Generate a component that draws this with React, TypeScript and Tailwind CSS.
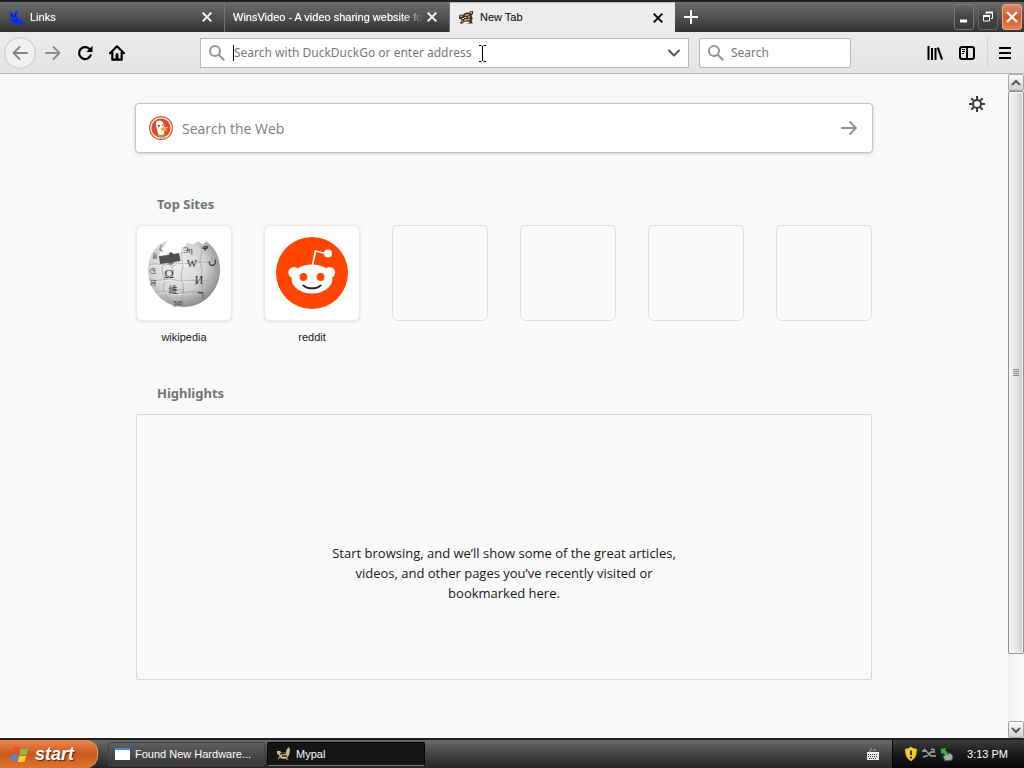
import type { ReactNode } from "react";

function RabbitIcon() {
  return (
    <svg width="16" height="16" viewBox="0 0 16 16" aria-hidden="true">
      <path d="M1 1l2.500 4.500L4 2l2 4.500L8 1l1.500 1-.5 5.500 2 2 4 1.500 1 2.500-4 2.500-6-1-4-4 1-3z" fill="#0a35e6" />
      <path d="M3 5l2 4M7.500 4l-.5 4M5 11l5 1.500" stroke="#0a1f8a" fill="none" />
    </svg>
  );
}

function MypalIcon() {
  return (
    <svg width="16" height="16" viewBox="0 0 16 16" aria-hidden="true">
      <path d="M1 6c1-2 3-1.500 4-1 1-2 4-3 6-2l1-2 3 0 0 3-1.500 1.500C15 8 15 10 13.500 10.500l1.500 3-3-.5-1.500-1.500H7L4 13.500l-2-.5 2-3L1 8.500z" fill="#3b2c1c" />
      <path d="M2 6.500l2.500-.5M7 5.500l4-1M6 10l6-.5M4 12l1-1" stroke="#cf9c5c" strokeWidth="1.300" fill="none" />
      <path d="M6.500 7.500h2M10 7h2M4 8.500h2" stroke="#fff1d0" fill="none" />
      <circle cx="13" cy="2.600" r="1.100" fill="#b9a888" />
      <path d="M9.500 13.500h4M2 13.500h3" stroke="#8a8278" fill="none" />
    </svg>
  );
}

function CloseIcon() {
  return (
    <svg width="10" height="10" viewBox="0 0 10 10" aria-hidden="true">
      <path d="M0.700 0.700l8.600 8.600M9.300 0.700l-8.600 8.600" stroke="currentColor" strokeWidth="1.900" fill="none" />
    </svg>
  );
}

function SearchIcon() {
  return (
    <svg width="16" height="16" viewBox="0 0 16 16" className="shrink-0 text-[#949494]" aria-hidden="true">
      <circle cx="6" cy="6" r="5" stroke="currentColor" strokeWidth="2" fill="none" />
      <path d="M9.700 9.700l5.600 5.600" stroke="currentColor" strokeWidth="2" />
    </svg>
  );
}

function Tab({ title, icon, active = false }: { title: string; icon?: ReactNode; active?: boolean }) {
  return (
    <div
      className={
        active
          ? "flex w-[225px] min-w-0 items-center border-t border-[#bdbdbd] bg-[#ececec] pr-3 pl-2 text-black"
          : "flex w-[225px] min-w-0 items-center border-r border-[#747474] pr-3 pl-2 text-white"
      }
    >
      {icon && <span className="mr-1.5 shrink-0">{icon}</span>}
      <span
        className={
          active
            ? "flex-1 overflow-hidden text-[11px] whitespace-nowrap"
            : "flex-1 overflow-hidden mask-r-from-90% text-[11px] whitespace-nowrap text-shadow-[0_0_1px_#ffffff99]"
        }
      >
        {title}
      </span>
      <button type="button" aria-label={"Close " + title} className="ml-1 shrink-0">
        <CloseIcon />
      </button>
    </div>
  );
}

function TabBar() {
  return (
    <header className="flex h-8 border-t-2 border-[#242224] bg-linear-to-b from-[#6b6b6b] via-[#525252] via-50% to-[#323132] font-['Liberation_Sans',sans-serif]">
      <Tab title="Links" icon={<RabbitIcon />} />
      <Tab title="WinsVideo - A video sharing website fo" />
      <Tab title="New Tab" icon={<MypalIcon />} active />
      <button type="button" aria-label="New tab" className="px-2 text-white">
        <svg width="16" height="16" viewBox="0 0 16 16">
          <path d="M8 1v14M1 8h14" stroke="currentColor" strokeWidth="2" />
        </svg>
      </button>
      <div className="ml-auto flex items-center gap-1 pr-0.5 text-white">
        <button type="button" aria-label="Minimize" className="flex h-[26px] w-5 items-center justify-center rounded-[3px] border border-[#777] bg-linear-to-b from-[#666] via-[#444] to-[#3a3a3a]">
          <svg width="14" height="14" viewBox="0 0 14 14">
            <path d="M3 11h7" stroke="currentColor" strokeWidth="3" />
          </svg>
        </button>
        <button type="button" aria-label="Restore" className="flex h-[26px] w-5 items-center justify-center rounded-[3px] border border-[#666] bg-linear-to-b from-[#666] via-[#444] to-[#3a3a3a]">
          <svg width="12" height="12" viewBox="0 0 12 12" fill="none" stroke="currentColor">
            <path d="M4 3V1.500h6.500v6H9" />
            <path d="M4 1.500h7M1 5h7" strokeWidth="2" />
            <path d="M1.500 4.500h6v5.500h-6z" />
          </svg>
        </button>
        <button type="button" aria-label="Close" className="flex h-[26px] w-5 items-center justify-center rounded-[3px] border border-[#eba487] bg-linear-to-b from-[#dd8a6c] via-[#cf5a2e] to-[#e47f4a]">
          <svg width="12" height="12" viewBox="0 0 12 12">
            <path d="M1 1l10 10M11 1L1 11" stroke="currentColor" strokeWidth="2.200" />
          </svg>
        </button>
      </div>
    </header>
  );
}

function NavBar() {
  return (
    <nav className="flex h-[42px] items-center border-b border-[#b4b4b4] bg-linear-to-b from-[#ececec] to-[#e4e4e4] px-1 pt-px">
      <div className="flex w-[196px] shrink-0 items-center">
        <button type="button" aria-label="Back" className="flex size-8 items-center justify-center rounded-full border border-[#c8c8c8] bg-[#f1f1f1] text-[#858585]">
          <svg width="16" height="16" viewBox="0 0 16 16" fill="none" stroke="currentColor" strokeWidth="2" strokeLinecap="round" strokeLinejoin="round">
            <path d="M15 8H1.500M7.500 2l-6 6 6 6" />
          </svg>
        </button>
        <button type="button" aria-label="Forward" className="flex w-8 justify-center pl-0.5 text-[#8c8c8c]">
          <svg width="16" height="16" viewBox="0 0 16 16" fill="none" stroke="currentColor" strokeWidth="2" strokeLinecap="round" strokeLinejoin="round">
            <path d="M1 8h13.500M8.500 2l6 6-6 6" />
          </svg>
        </button>
        <button type="button" aria-label="Reload" className="flex w-8 justify-center pl-0.5">
          <svg width="16" height="16" viewBox="0 0 16 16">
            <path d="M13.700 10.200A6 6 0 1 1 12.300 3.800" fill="none" stroke="#000" strokeWidth="2.200" strokeLinecap="round" />
            <path d="M15.500 0.700v6.200h-6.200z" fill="#000" />
          </svg>
        </button>
        <button type="button" aria-label="Home" className="flex w-8 justify-center pl-0.5">
          <svg width="16" height="16" viewBox="0 0 16 16">
            <path d="M1 8.200L8 1.300l7 6.900" fill="none" stroke="#000" strokeWidth="2.200" strokeLinecap="round" strokeLinejoin="round" />
            <path d="M3.300 7v7.700h9.400V7" fill="none" stroke="#000" strokeWidth="2.200" strokeLinejoin="round" />
            <path d="M6.500 14.500V9.500a1.500 1.500 0 0 1 3 0v5z" fill="#000" />
          </svg>
        </button>
      </div>
      <form className="relative flex h-[30px] flex-1 items-center border border-[#b6b6b6] bg-white pr-1.5 pl-2" onSubmit={(e) => e.preventDefault()}>
        <SearchIcon />
        <span className="ml-2 h-4 w-px shrink-0 bg-black" />
        <input aria-label="Address" placeholder="Search with DuckDuckGo or enter address" className="min-w-0 flex-1 bg-transparent text-[12px] outline-none placeholder:text-[#777]" />
        <button type="button" aria-label="Show history" className="text-[#555]">
          <svg width="16" height="16" viewBox="0 0 16 16">
            <path d="M3 5.500l5 5 5-5" fill="none" stroke="currentColor" strokeWidth="2" strokeLinecap="round" strokeLinejoin="round" />
          </svg>
        </button>
        <svg width="9" height="17" viewBox="0 0 9 17" className="pointer-events-none absolute top-1.5 left-[277px]" aria-hidden="true">
          <path d="M1 .5h2.500M5.500 .5H8M1 16.500h2.500M5.500 16.500H8M4.500 1v15" stroke="#000" fill="none" />
        </svg>
      </form>
      <form className="ml-2.5 flex h-[30px] w-[152px] items-center rounded-xs border border-[#b6b6b6] bg-white px-2" onSubmit={(e) => e.preventDefault()}>
        <SearchIcon />
        <input aria-label="Search" placeholder="Search" className="ml-[7px] min-w-0 flex-1 bg-transparent text-[12px] outline-none placeholder:text-[#777]" />
      </form>
      <div className="flex w-[169px] shrink-0 items-center justify-end gap-4">
        <button type="button" aria-label="Library">
          <svg width="16" height="16" viewBox="0 0 16 16" fill="none" stroke="#000" strokeWidth="2">
            <path d="M1.500 1v14M5 3v12M8.500 3v12" />
            <path d="M10.800 2.500l4.200 12" strokeWidth="2.200" />
          </svg>
        </button>
        <button type="button" aria-label="Sidebars">
          <svg width="16" height="16" viewBox="0 0 16 16" fill="none" stroke="#000">
            <rect x="1" y="2" width="14" height="12" rx="2.200" strokeWidth="2" />
            <path d="M8 2v12" strokeWidth="2" />
            <path d="M3 4.500h3M3 6.500h3M3 8.500h2" />
          </svg>
        </button>
        <div className="-mr-1.5 -ml-1 h-8 w-px bg-[#d4d4d4]" />
        <button type="button" aria-label="Menu" className="pr-2">
          <svg width="14" height="14" viewBox="0 0 14 14">
            <path d="M1 2h12M1 7h12M1 12h12" stroke="#000" strokeWidth="2" />
          </svg>
        </button>
      </div>
    </nav>
  );
}

function DuckIcon() {
  return (
    <svg width="24" height="24" viewBox="0 0 24 24" className="shrink-0" aria-hidden="true">
      <circle cx="12" cy="12" r="12" fill="#dc4f2e" />
      <circle cx="12" cy="12" r="10.200" fill="none" stroke="#fbe4dc" strokeWidth="1.300" />
      <path d="M7 6.500C7.500 4.500 11 3.500 13.500 6c2 2 2.200 5 1.700 8l-.2 7.500-5-.5C9 16 6.500 10 7 6.500z" fill="#fdf8ee" />
      <circle cx="9.800" cy="9.800" r="1" fill="#27466b" />
      <circle cx="13.800" cy="9.300" r=".8" fill="#27466b" />
      <path d="M11.500 12.500c2-1.500 5-1.800 8-1.500-1 1.500-3 1.700-3 2.500s2 .7 2 1.300c-2 .9-6.500 .5-7-2.300z" fill="#f5b52f" />
      <path d="M9.500 18.500l3 .5 3.500-1.500v4l-5.500 .3z" fill="#83a951" />
    </svg>
  );
}

function WikipediaLogo() {
  return (
    <svg width="76" height="72" viewBox="0 0 76 72" aria-hidden="true">
      <defs>
        <radialGradient id="globe" cx=".4" cy=".38" r=".66">
          <stop offset="0" stopColor="#eeeeee" />
          <stop offset=".6" stopColor="#d3d3d3" />
          <stop offset="1" stopColor="#858585" />
        </radialGradient>
      </defs>
      <path d="M21 3.500C8 9 2 20 2 33c0 20 16 37 36 37s36-17 36-37C74 20 69 10 60 4.500l-3 3-5-3-5 3-6-2-2 4-4 1v4l-4 3-9-1-9 4 2-7 4-5z" fill="url(#globe)" />
      <path d="M13 19l10-1c-1-3 4-4 4-1l6-1 1.500 8-7 1c1 4-5 5-5 1L14 27z" fill="#515151" />
      <g fill="none" stroke="#a2a2a2" strokeWidth=".8">
        <path d="M36 15c-1 9 3 11 0 19s3 13 1 21 1 10 0 14M3 28c9-3 12 2 20-1s14 2 20-1 18 1 30-2M3 42c11 4 17-2 25 1s14-1 20 1 16-2 25-2M11 56c10-4 15 3 25 0s21 0 29-2" />
        <path d="M17 28c-3 9 4 12 1 19s5 14 7 19M55 8c3 8-3 15 0 21s-2 12 1 20-2 12-4 17M30 28c-4 0-5 4-2 6M46 43c5 0 5 4 2 6M31 54c4-3 7-1 7 2" />
      </g>
      <g fill="none" stroke="#f4f4f4" strokeWidth=".7">
        <path d="M37 17c-1 8 3 10 0 18M4 29c9-3 12 2 20-1s14 2 20-1M4 43c11 4 17-2 25 1s14-1 20 1M12 57c10-4 15 3 25 0" />
      </g>
      <g fill="#343434" fontFamily="Liberation Serif, serif" textAnchor="middle">
        <text x="23" y="41" fontSize="13">Ω</text>
        <text x="46" y="30" fontSize="11">W</text>
        <text x="53" y="47" fontSize="12">И</text>
        <text x="27" y="56" fontSize="9" fontFamily="Noto Sans CJK SC, sans-serif">維</text>
        <text x="42" y="16" fontSize="8">Эη</text>
        <text x="59" y="14" fontSize="10">ቀ</text>
        <text x="66" y="27" fontSize="12">ن</text>
        <text x="55" y="62" fontSize="13">ר</text>
        <text x="32" y="68" fontSize="7">უთ</text>
        <text x="6" y="37" fontSize="10">ও</text>
        <text x="7" y="49" fontSize="9">ल</text>
        <text x="9" y="22" fontSize="8">й</text>
        <text x="15" y="14" fontSize="8">ζ</text>
      </g>
    </svg>
  );
}

function RedditLogo() {
  return (
    <svg width="72" height="72" viewBox="0 0 72 72" aria-hidden="true">
      <circle cx="36" cy="36" r="36" fill="#ff4500" />
      <path d="M36.500 28l3-14 12 3" fill="none" stroke="#fff" strokeWidth="1.800" strokeLinejoin="round" />
      <circle cx="52" cy="16.500" r="4" fill="#fff" />
      <circle cx="18" cy="35.500" r="5.600" fill="#fff" />
      <circle cx="53.500" cy="35.500" r="5.600" fill="#fff" />
      <ellipse cx="36" cy="42" rx="20.500" ry="14.500" fill="#fff" />
      <circle cx="27.500" cy="40" r="3.900" fill="#ff4500" />
      <circle cx="44.500" cy="40" r="3.900" fill="#ff4500" />
      <path d="M27.500 48.500c4 3.800 13 3.800 17 0" fill="none" stroke="#222" strokeWidth="2" strokeLinecap="round" />
    </svg>
  );
}

function Site({ name, children }: { name: string; children: ReactNode }) {
  return (
    <a href="#" className="flex w-24 flex-col text-center font-['Liberation_Sans',sans-serif] text-[11px] leading-4 text-[#171717]">
      <span className="flex h-24 items-center justify-center rounded-md border border-[#ececec] bg-white shadow-[0_1px_3px_#dadada]">{children}</span>
      <span className="mt-2">{name}</span>
    </a>
  );
}

function NewTabPage() {
  return (
    <main className="relative flex-1 bg-[#f9f9fa] px-6 pt-[29px] pb-10">
      <button type="button" aria-label="Customize this page" className="absolute top-[22px] right-[23px] text-[#3c3c3c]">
        <svg width="16" height="16" viewBox="0 0 16 16" fill="none" stroke="currentColor">
          <circle cx="8" cy="8" r="4" strokeWidth="2" />
          <path d="M8 0v4M8 12v4M0 8h4M12 8h4M2.300 2.300l2.800 2.800M10.900 10.900l2.800 2.800M13.700 2.300l-2.800 2.800M5.100 10.900l-2.800 2.800" strokeWidth="2" />
        </svg>
      </button>
      <div className="mx-auto max-w-[738px]">
        <form className="flex h-[50px] items-center rounded-sm border border-[#c4c4c4] bg-white px-[13px] shadow-[0_1px_3px_#d4d4d4]" onSubmit={(e) => e.preventDefault()}>
          <DuckIcon />
          <input aria-label="Search the Web" placeholder="Search the Web" className="ml-[9px] min-w-0 flex-1 bg-transparent font-['Open_Sans',sans-serif] text-[14px] outline-none placeholder:text-[#7d7d7d]" />
          <button type="submit" aria-label="Submit search" className="pr-0.5 text-[#909090]">
            <svg width="16" height="16" viewBox="0 0 16 16" fill="none" stroke="currentColor" strokeWidth="1.800" strokeLinecap="round" strokeLinejoin="round">
              <path d="M0.900 8h14M9 2l6 6-6 6" />
            </svg>
          </button>
        </form>
        <section className="mt-[39px] px-px">
          <h2 className="pl-[21px] text-[13px] leading-6 font-bold text-[#737373]">Top Sites</h2>
          <div className="mt-[9px] flex flex-wrap justify-between gap-y-4">
            <Site name="wikipedia"><WikipediaLogo /></Site>
            <Site name="reddit"><RedditLogo /></Site>
            <div className="size-24 rounded-md border border-[#dedede]" />
            <div className="size-24 rounded-md border border-[#dedede]" />
            <div className="size-24 rounded-md border border-[#dedede]" />
            <div className="size-24 rounded-md border border-[#dedede]" />
          </div>
        </section>
        <section className="mt-9 px-px">
          <h2 className="pl-[21px] text-[13px] leading-6 font-bold text-[#737373]">Highlights</h2>
          <div className="mt-[9px] flex h-[266px] justify-center rounded-xs border border-[#d7d7d7] pt-32">
            <p className="w-[350px] text-center font-['Open_Sans',sans-serif] text-[13px] leading-5 text-[#171717]">
              Start browsing, and we’ll show some of the great articles, videos, and other pages you’ve recently visited or bookmarked here.
            </p>
          </div>
        </section>
      </div>
    </main>
  );
}

function ScrollButton({ down = false }: { down?: boolean }) {
  return (
    <button type="button" aria-label={down ? "Scroll down" : "Scroll up"} className="flex h-[17px] items-center justify-center rounded-xs border border-[#a3a3a3] bg-linear-to-b from-white to-[#cfcfcf]">
      <svg width="10" height="8" viewBox="0 0 10 8">
        <path d={down ? "M1 2l4 4 4-4" : "M1 6l4-4 4 4"} fill="none" stroke="#555" strokeWidth="2" />
      </svg>
    </button>
  );
}

function Scrollbar() {
  return (
    <div className="flex w-4 shrink-0 flex-col bg-linear-to-r from-[#efefef] to-[#fafafa]">
      <ScrollButton />
      <div className="flex flex-1 flex-col">
        <div className="flex flex-[563] items-center justify-center rounded-xs border border-[#8f8f8f] bg-linear-to-r from-[#f6f6f6] via-[#e6e6e6] to-[#cbcbcb] inset-ring inset-ring-[#f8f8f8]">
          <svg width="6" height="8" viewBox="0 0 6 8">
            <path d="M0 .5h6M0 2.500h6M0 4.500h6M0 6.500h6" stroke="#888" />
          </svg>
        </div>
        <div className="flex-[67]" />
      </div>
      <ScrollButton down />
    </div>
  );
}

function Taskbar() {
  return (
    <footer className="flex h-[30px] items-stretch border-t-2 border-[#1e1e1e] bg-linear-to-b from-[#696969] via-[#454545] to-[#252525] font-['Liberation_Sans',sans-serif] text-[11px] text-white">
      <button type="button" className="flex w-[98px] items-center gap-1.5 rounded-r-xl border-r border-[#f4a263] bg-linear-to-b from-[#ee8a50] via-[#c8571d] to-[#e0742f] pl-2.5 text-[18px] font-bold italic text-shadow-[1px_1px_1px_#552000]">
        <svg width="19" height="17" viewBox="0 0 19 17" aria-hidden="true">
          <path d="M4 2q3-2 6 0L8.500 8q-3-1.500-6 0z" fill="#e8502c" />
          <path d="M11 2.500q3 1.500 7 0L16.500 8.500q-3.500 1.500-7 0z" fill="#86c440" />
          <path d="M2.200 9q3-1.500 6 0L6.700 15q-3-2-6 0z" fill="#4a86e8" />
          <path d="M9.200 9.500q3.500 1.500 7 0L14.700 15.500q-3.500 1.500-7 0z" fill="#fbd13b" />
        </svg>
        start
      </button>
      <div className="flex gap-0.5 py-0.5 pl-2.5">
        <button type="button" className="flex w-[157px] items-center gap-1 rounded-xs border border-[#424242] bg-linear-to-b from-[#606060] to-[#363636] pl-1.5 whitespace-nowrap">
          <svg width="16" height="12" viewBox="0 0 16 12" aria-hidden="true">
            <rect width="15" height="12" fill="#fff" />
            <rect width="15" height="2" fill="#3c8ed8" />
          </svg>
          Found New Hardware...
        </button>
        <button type="button" className="flex w-[158px] items-center gap-1 rounded-xs border border-[#050505] border-b-[#777] bg-[#151515] pl-2">
          <svg width="16" height="16" viewBox="0 0 16 16" aria-hidden="true">
            <path d="M1 5l3 0 2 2 4-1 1-3 2-2 1 3-1 5-2 3-3 1-4-1-1-3-2-1z" fill="#cbbd96" />
            <path d="M4 8l6-1M6 10h5" stroke="#2b2115" strokeWidth="1.500" />
            <path d="M2 12l3-1M10 12l2 2" stroke="#9c8a62" strokeWidth="1.500" />
          </svg>
          Mypal
        </button>
      </div>
      <div className="ml-auto flex items-center pr-3">
        <svg width="14" height="12" viewBox="0 0 14 12" aria-hidden="true">
          <path d="M4 1h2M7 2h3M3 3h2" stroke="#bbb" />
          <rect x="1" y="4" width="12" height="8" fill="#eee" />
          <path d="M2 6.500h10M2 8.500h10M3 10.500h8" stroke="#333" strokeDasharray="1 1" />
        </svg>
      </div>
      <div className="flex items-center gap-0.5 border-l border-black bg-linear-to-b from-[#3c3c3c] via-[#1b1b1b] to-[#070707] pr-4 pl-2.5">
        <svg width="16" height="16" viewBox="0 0 16 16" aria-hidden="true">
          <path d="M8 1c2 1.500 3.500 2 5.500 2 0 6-1 9-5.500 12C3.500 12 2.500 9 2.500 3 4.500 3 6 2.500 8 1z" fill="#f6cc25" stroke="#d8c27a" strokeWidth=".6" />
          <path d="M8 4.500v4.500M8 10.500v2" stroke="#282000" strokeWidth="1.800" />
        </svg>
        <svg width="16" height="16" viewBox="0 0 16 16" fill="none" stroke="#a4aca6" strokeWidth="1.300" aria-hidden="true">
          <path d="M1 5h4l5 5h5M2 11l4-1 4-4h4M10 3l4 1M3 3l2 2" />
        </svg>
        <svg width="16" height="16" viewBox="0 0 16 16" aria-hidden="true">
          <path d="M4 10l7-3 3 3-1 4-7 1z" fill="#a5ada7" stroke="#555" />
          <path d="M2 3l5-1-1 2 3 3-2 3-3-3-2 1z" fill="#39b54a" />
        </svg>
        <time className="ml-2.5 whitespace-nowrap">3:13 PM</time>
      </div>
    </footer>
  );
}

export default function App() {
  return (
    <div className="flex min-h-screen flex-col bg-[#f9f9fa] font-['Noto_Sans','Open_Sans',sans-serif]">
      <TabBar />
      <NavBar />
      <div className="flex flex-1">
        <NewTabPage />
        <Scrollbar />
      </div>
      <Taskbar />
    </div>
  );
}
